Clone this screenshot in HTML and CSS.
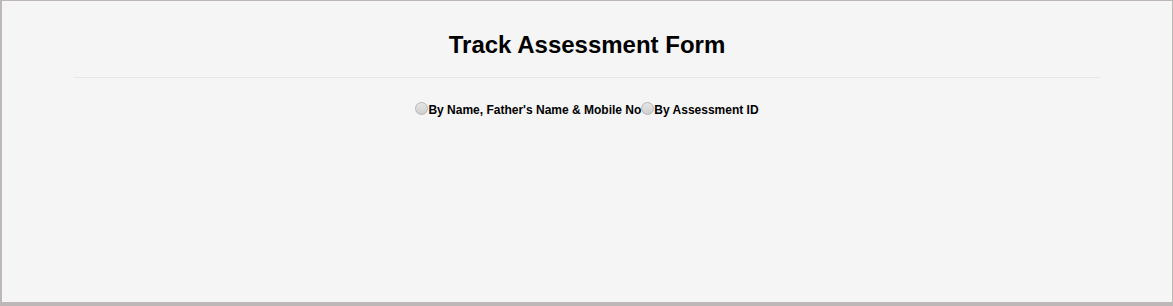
FILE: index.html
```html
<!DOCTYPE html>
<html>
<head>
<meta charset="utf-8">
<link rel="stylesheet" href="styles.css">
</head>
<body>
<div class="frame">
  <div class="container">
    <h2 class="title">Track Assessment Form</h2>
    <hr class="rule">
    <div class="options">
      <label class="opt"><input type="radio" name="mode" class="radio">By Name, Father's Name &amp; Mobile No</label>
      <label class="opt"><input type="radio" name="mode" class="radio">By Assessment ID</label>
    </div>
  </div>
</div>
</body>
</html>
```
FILE: styles.css
```css
html, body {
  margin: 0;
  padding: 0;
  height: 100%;
}
body {
  background: #bdb8b8;
  font-family: "Liberation Sans", Arial, sans-serif;
}
.frame {
  box-sizing: border-box;
  height: 306px;
  border-style: solid;
  border-color: #bdb7b7;
  border-width: 1px 1px 4px 2px;
  background: #f5f5f5;
}
.container {
  margin: 0 72px 0 72px;
  padding-top: 29px;
}
.title {
  margin: 0;
  text-align: center;
  font-size: 24px;
  font-weight: bold;
  color: #000;
  line-height: 30px;
}
.rule {
  margin: 17px 0 0 0;
  border: 0;
  border-top: 1px solid #e6e6e6;
  height: 0;
}
.options {
  display: flex;
  justify-content: center;
  margin-top: 24px;
}
.opt {
  display: flex;
  align-items: center;
  font-size: 12px;
  font-weight: bold;
  color: #000;
  line-height: 16px;
}
.radio {
  appearance: none;
  -webkit-appearance: none;
  width: 13px;
  height: 13px;
  margin: -4px 0 0 0;
  border-radius: 50%;
  border: 1px solid #b5b5b5;
  background: linear-gradient(#e6e6e6, #cfcfcf);
  box-sizing: border-box;
}
```
